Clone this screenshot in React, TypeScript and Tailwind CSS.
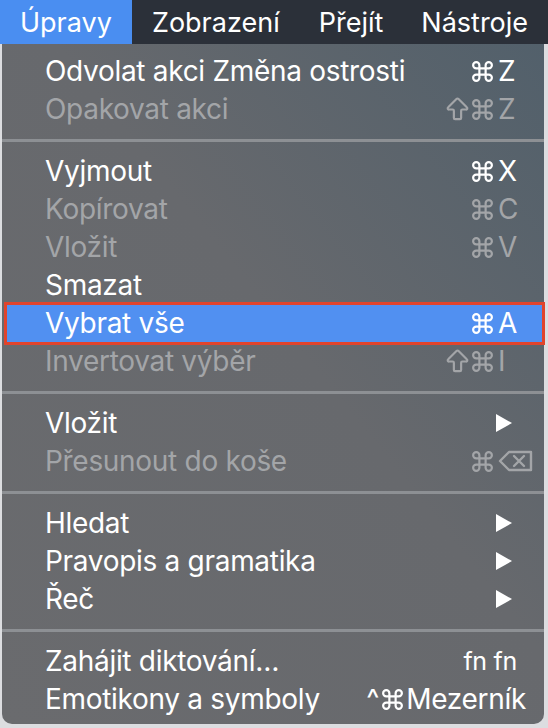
import type { ReactNode } from "react";
import { Command, ArrowBigUp } from "lucide-react";

type Row = {
  label: string;
  mods?: ("shift" | "cmd")[];
  keyChar?: ReactNode;
  text?: string;
  disabled?: boolean;
  submenu?: boolean;
  selected?: boolean;
};

type Entry = Row | "sep";

const FONT = { fontFamily: 'Inter, "Noto Sans", "DejaVu Sans", sans-serif' };

const ENTRIES: Entry[] = [
  { label: "Odvolat akci Změna ostrosti", mods: ["cmd"], keyChar: "Z" },
  { label: "Opakovat akci", mods: ["shift", "cmd"], keyChar: "Z", disabled: true },
  "sep",
  { label: "Vyjmout", mods: ["cmd"], keyChar: "X" },
  { label: "Kopírovat", mods: ["cmd"], keyChar: "C", disabled: true },
  { label: "Vložit", mods: ["cmd"], keyChar: "V", disabled: true },
  { label: "Smazat" },
  { label: "Vybrat vše", mods: ["cmd"], keyChar: "A", selected: true },
  { label: "Invertovat výběr", mods: ["shift", "cmd"], keyChar: "I", disabled: true },
  "sep",
  { label: "Vložit", submenu: true },
  { label: "Přesunout do koše", mods: ["cmd"], keyChar: <BackspaceIcon />, disabled: true },
  "sep",
  { label: "Hledat", submenu: true },
  { label: "Pravopis a gramatika", submenu: true },
  { label: "Řeč", submenu: true },
  "sep",
  { label: "Zahájit diktování…", text: "fn fn" },
  { label: "Emotikony a symboly", text: "^⌘Mezerník" },
];

function BackspaceIcon() {
  return (
    <svg width="36" height="22" viewBox="0 0 36 22" fill="none" stroke="currentColor" strokeWidth="2.4" strokeLinejoin="round">
      <path d="M11 2 H33 V20 H11 L2 11 Z" />
      <path d="M16 6 L26 16 M26 6 L16 16" strokeLinecap="round" />
    </svg>
  );
}

function Triangle() {
  return (
    <svg width="16" height="18" viewBox="0 0 16 18">
      <polygon points="0,0 16,9 0,18" fill="currentColor" />
    </svg>
  );
}

function Mod({ kind }: { kind: "shift" | "cmd" }) {
  return kind === "cmd" ? (
    <Command size={25} strokeWidth={2.1} />
  ) : (
    <ArrowBigUp size={29} strokeWidth={1.8} className="mr-[-2px]" />
  );
}

function MenuRow({ row }: { row: Row }) {
  const color = row.disabled ? "text-[#a3a5a8]" : "text-white";
  return (
    <div className="relative h-[38px]">
      {row.selected && (
        <div className="absolute left-[2px] right-[-1px] top-[-2px] bottom-[-3px] border-[3px] border-[#e1442c] bg-[#5190f1]" />
      )}
      <div className={`relative flex h-full items-center justify-between pl-[43px] ${color}`}>
        <span className="text-[28px] leading-none tracking-[-0.3px]">{row.label}</span>
        {row.submenu && (
          <span className="mr-[32px] flex items-center">
            <Triangle />
          </span>
        )}
        {row.keyChar && (
          <span className="flex items-center">
            {row.mods?.map((m, i) => <Mod key={i} kind={m} />)}
            <span className="flex w-[49px] items-center pl-[3px] text-[28px] leading-none">{row.keyChar}</span>
          </span>
        )}
        {row.text && (
          <span className="mr-[18px] flex items-center text-[28px] leading-none tracking-[-0.3px]">
            {row.text === "fn fn" ? (
              <span className="mr-[9px] text-[25px]">fn fn</span>
            ) : (
              <>
                <span className="mr-[1px]">^</span>
                <Command size={25} strokeWidth={2.1} />
                <span className="ml-[1px]">Mezerník</span>
              </>
            )}
          </span>
        )}
      </div>
    </div>
  );
}

export default function App() {
  return (
    <div className="h-[728px] w-[548px] overflow-hidden bg-[#dcdde0]" style={FONT}>
      {/* menu bar */}
      <div className="flex h-[44px] items-center bg-[#2b3039] text-[27px] leading-none text-white">
        <div className="flex h-full items-center bg-[#4a8ef1] px-[20px]">Úpravy</div>
        <div className="px-[20px]">Zobrazení</div>
        <div className="px-[19px]">Přejít</div>
        <div className="px-[19px]">Nástroje</div>
      </div>

      {/* dropdown */}
      <div className="mx-[2px] w-[542px] rounded-b-[10px] bg-[#6a6c6f] bg-linear-to-bl from-[#52606b] via-[#67696d] via-45% to-[#6a6b6e] pb-[6px] pt-[8px]">
        {ENTRIES.map((e, i) =>
          e === "sep" ? (
            <div key={i} className="flex h-[24px] items-center">
              <div className="h-[3px] w-full bg-[#8d9094]" />
            </div>
          ) : (
            <MenuRow key={i} row={e} />
          )
        )}
      </div>
    </div>
  );
}
